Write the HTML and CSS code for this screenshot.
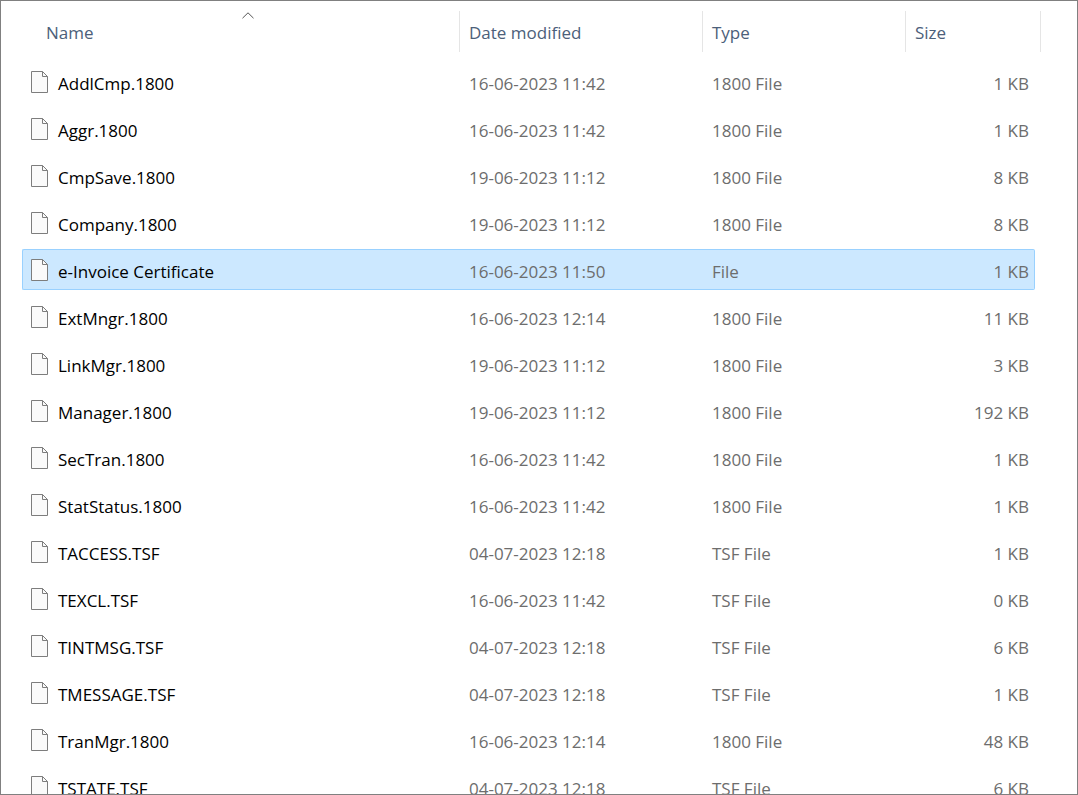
FILE: index.html
```html
<!DOCTYPE html>
<html lang="en">

<head>
    <meta charset="UTF-8">
    <meta name="viewport" content="width=device-width, initial-scale=1.0">
    <title>Files</title>
    <link rel="stylesheet" href="styles.css">
</head>

<body>
    <svg class="sprite" aria-hidden="true">
        <symbol id="file" viewBox="0 0 17 22">
            <path d="M.5 .5H11.5L16.5 5.5V21.5H.5Z" fill="#fafafa" stroke="#7d7d7d" />
            <path d="M11.5 .5V5.5H16.5" fill="none" stroke="#7d7d7d" />
        </symbol>
    </svg>

    <main class="window">
        <table class="file-list">
            <colgroup>
                <col>
                <col class="col-date">
                <col class="col-type">
                <col class="col-size">
                <col class="col-end">
            </colgroup>
            <thead>
                <tr>
                    <th class="head-name" aria-sort="ascending">
                        <button class="head-button">Name
                            <svg class="sort-arrow" width="12" height="7" viewBox="0 0 12 7" aria-hidden="true">
                                <path d="M.5 6.2L6 .8L11.5 6.2" fill="none" stroke="#555" />
                            </svg>
                        </button>
                    </th>
                    <th><button class="head-button">Date modified</button></th>
                    <th><button class="head-button">Type</button></th>
                    <th colspan="2"><button class="head-button">Size</button></th>
                </tr>
            </thead>
            <tbody id="files"></tbody>
        </table>
    </main>

    <script>
        let files = [
            ['AddlCmp.1800', '16-06-2023 11:42', '1800 File', '1 KB'],
            ['Aggr.1800', '16-06-2023 11:42', '1800 File', '1 KB'],
            ['CmpSave.1800', '19-06-2023 11:12', '1800 File', '8 KB'],
            ['Company.1800', '19-06-2023 11:12', '1800 File', '8 KB'],
            ['e-Invoice Certificate', '16-06-2023 11:50', 'File', '1 KB'],
            ['ExtMngr.1800', '16-06-2023 12:14', '1800 File', '11 KB'],
            ['LinkMgr.1800', '19-06-2023 11:12', '1800 File', '3 KB'],
            ['Manager.1800', '19-06-2023 11:12', '1800 File', '192 KB'],
            ['SecTran.1800', '16-06-2023 11:42', '1800 File', '1 KB'],
            ['StatStatus.1800', '16-06-2023 11:42', '1800 File', '1 KB'],
            ['TACCESS.TSF', '04-07-2023 12:18', 'TSF File', '1 KB'],
            ['TEXCL.TSF', '16-06-2023 11:42', 'TSF File', '0 KB'],
            ['TINTMSG.TSF', '04-07-2023 12:18', 'TSF File', '6 KB'],
            ['TMESSAGE.TSF', '04-07-2023 12:18', 'TSF File', '1 KB'],
            ['TranMgr.1800', '16-06-2023 12:14', '1800 File', '48 KB'],
            ['TSTATE.TSF', '04-07-2023 12:18', 'TSF File', '6 KB']
        ]
        let selected = 'e-Invoice Certificate'

        document.getElementById('files').innerHTML = files.map(([name, date, type, size]) => `
            <tr class="${name === selected ? 'selected' : ''}">
                <td>
                    <div class="file-name">
                        <svg class="file-icon" aria-hidden="true"><use href="#file" /></svg>
                        <span>${name}</span>
                    </div>
                </td>
                <td>${date}</td>
                <td>${type}</td>
                <td class="size">${size}</td>
            </tr>`).join('')
    </script>
</body>

</html>
```

FILE: styles.css
```css
* {
    box-sizing: border-box;
}

:root {
    --text: #000;
    --muted: #6d6d6d;
    --heading: #4c607a;
    --line: #e5e5e5;
    --selected: #cce8ff;
    --selected-border: #99d1ff;
}

body {
    margin: 0;
    background: #fff;
    color: var(--text);
    font-family: "Segoe UI", "Open Sans", "Noto Sans", sans-serif;
    font-size: 17px;
    line-height: 24px;
}

.sprite {
    display: none;
}

.window {
    height: 100vh;
    overflow: hidden;
    padding: 4px 36px 0 21px;
    border: 1px solid #808080;
}

.file-list {
    width: 100%;
    table-layout: fixed;
    border-collapse: separate;
    border-spacing: 0 6px;
}

.col-date {
    width: 243px;
}

.col-type {
    width: 203px;
}

.col-size {
    width: 129px;
}

.col-end {
    width: 6px;
}

th {
    padding: 0 0 3px;
    font-weight: normal;
}

.head-name {
    padding-left: 15px;
}

.head-button {
    position: relative;
    display: block;
    width: 100%;
    height: 41px;
    padding: 2px 9px 0;
    border: 0;
    border-right: 1px solid var(--line);
    background: none;
    color: var(--heading);
    font: inherit;
    text-align: left;
}

.sort-arrow {
    position: absolute;
    top: 1px;
    left: 50%;
    transform: translateX(-50%);
}

td {
    height: 41px;
    padding: 5px 9px 0;
    border: 1px solid transparent;
    border-width: 1px 0;
    color: var(--muted);
    white-space: nowrap;
}

td:first-child {
    padding: 0 8px;
    border-left-width: 1px;
    color: var(--text);
}

td.size {
    padding-right: 5px;
    border-right-width: 1px;
    text-align: right;
}

.file-name {
    display: flex;
    align-items: center;
    gap: 10px;
}

.file-name span {
    padding-top: 5px;
}

.file-icon {
    width: 17px;
    height: 22px;
}

.selected td {
    background: var(--selected);
    border-color: var(--selected-border);
}

.selected td:first-child {
    border-radius: 2px 0 0 2px;
}

.selected td.size {
    border-radius: 0 2px 2px 0;
}
```
